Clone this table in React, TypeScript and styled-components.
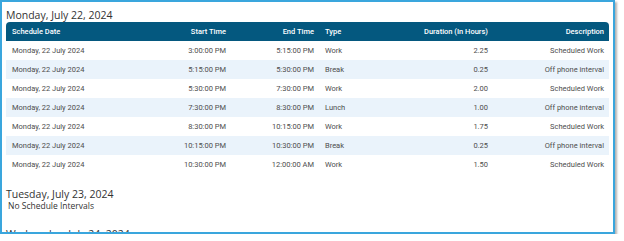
import styled, { createGlobalStyle } from 'styled-components';

const GlobalStyle = createGlobalStyle`
    html, body {
        margin: 0;
        padding: 0;
        background: #ffffff;
    }
`;

type Interval = {
    date: string;
    start: string;
    end: string;
    type: string;
    duration: string;
    description: string;
};

const monday: Interval[] = [
    { date: 'Monday, 22 July 2024', start: '3:00:00 PM', end: '5:15:00 PM', type: 'Work', duration: '2.25', description: 'Scheduled Work' },
    { date: 'Monday, 22 July 2024', start: '5:15:00 PM', end: '5:30:00 PM', type: 'Break', duration: '0.25', description: 'Off phone interval' },
    { date: 'Monday, 22 July 2024', start: '5:30:00 PM', end: '7:30:00 PM', type: 'Work', duration: '2.00', description: 'Scheduled Work' },
    { date: 'Monday, 22 July 2024', start: '7:30:00 PM', end: '8:30:00 PM', type: 'Lunch', duration: '1.00', description: 'Off phone interval' },
    { date: 'Monday, 22 July 2024', start: '8:30:00 PM', end: '10:15:00 PM', type: 'Work', duration: '1.75', description: 'Scheduled Work' },
    { date: 'Monday, 22 July 2024', start: '10:15:00 PM', end: '10:30:00 PM', type: 'Break', duration: '0.25', description: 'Off phone interval' },
    { date: 'Monday, 22 July 2024', start: '10:30:00 PM', end: '12:00:00 AM', type: 'Work', duration: '1.50', description: 'Scheduled Work' },
];

const App = () => {
    return (
        <>
            <GlobalStyle />
            <Frame>
                <Panel>
                    <DayTitle>Monday, July 22, 2024</DayTitle>
                    <Table>
                        <HeadRow>
                            <Cell>Schedule Date</Cell>
                            <Cell $right>Start Time</Cell>
                            <Cell $right>End Time</Cell>
                            <Cell>Type</Cell>
                            <Cell $right>Duration (In Hours)</Cell>
                            <Cell $right>Description</Cell>
                        </HeadRow>
                        {monday.map((row, i) => (
                            <BodyRow key={i} $alt={i % 2 === 1}>
                                <Cell>{row.date}</Cell>
                                <Cell $right>{row.start}</Cell>
                                <Cell $right>{row.end}</Cell>
                                <Cell>{row.type}</Cell>
                                <Cell $right>{row.duration}</Cell>
                                <Cell $right>{row.description}</Cell>
                            </BodyRow>
                        ))}
                    </Table>

                    <DayTitle $gap={13}>Tuesday, July 23, 2024</DayTitle>
                    <EmptyNote>No Schedule Intervals</EmptyNote>

                    <DayTitle $gap={16}>Wednesday, July 24, 2024</DayTitle>
                </Panel>
            </Frame>
        </>
    );
};

export default App;

const Frame = styled.div`
    width: 615px;
    height: 234px;
    box-sizing: border-box;
    border: 2px solid #3aa6dd;
    box-shadow: 2px 2px 2px rgba(0, 0, 0, 0.3);
    overflow: hidden;
    background: #ffffff;
`;

const Panel = styled.div`
    padding: 3px 0 0 4px;
    width: 603px;
`;

const DayTitle = styled.div<{ $gap?: number }>`
    font-family: 'Open Sans', 'Noto Sans', sans-serif;
    font-size: 10.5px;
    line-height: 14px;
    color: #333333;
    padding-top: ${(p) => (p.$gap ? `${p.$gap}px` : '3px')};
`;

const EmptyNote = styled.div`
    font-family: 'Open Sans', 'Noto Sans', sans-serif;
    font-size: 8.5px;
    line-height: 10px;
    color: #333333;
    padding-left: 2px;
`;

const Table = styled.div`
    font-family: Roboto, 'Liberation Sans', sans-serif;
    font-size: 7.5px;
`;

const Row = styled.div`
    display: grid;
    grid-template-columns: 125px 100px 88px 74px 100px 116px;
    height: 19px;
    align-items: center;
`;

const HeadRow = styled(Row)`
    background: #04587f;
    color: #ffffff;
    font-weight: 500;
    border-radius: 4px 4px 0 0;
`;

const BodyRow = styled(Row)<{ $alt?: boolean }>`
    background: ${(p) => (p.$alt ? '#eaf3fb' : '#ffffff')};
    color: #4d4d4d;
`;

const Cell = styled.div<{ $right?: boolean }>`
    padding: 0 5px 0 6px;
    text-align: ${(p) => (p.$right ? 'right' : 'left')};
    white-space: nowrap;
    overflow: hidden;
`;
